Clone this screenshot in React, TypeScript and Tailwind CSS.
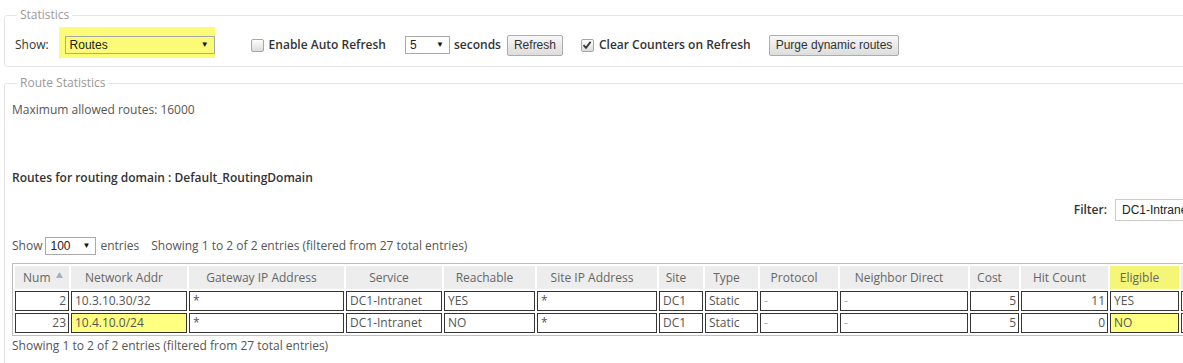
import React from 'react';

type Col = { label: string; w: number; align?: 'left' | 'right' };

const cols: Col[] = [
  { label: 'Num', w: 54, align: 'right' },
  { label: 'Network Addr', w: 116 },
  { label: 'Gateway IP Address', w: 155 },
  { label: 'Service', w: 96 },
  { label: 'Reachable', w: 91 },
  { label: 'Site IP Address', w: 120 },
  { label: 'Site', w: 44 },
  { label: 'Type', w: 53 },
  { label: 'Protocol', w: 78 },
  { label: 'Neighbor Direct', w: 128 },
  { label: 'Cost', w: 49, align: 'right' },
  { label: 'Hit Count', w: 87, align: 'right' },
  { label: 'Eligible', w: 69 },
  { label: '', w: 60 },
];

const rows = [
  ['2', '10.3.10.30/32', '*', 'DC1-Intranet', 'YES', '*', 'DC1', 'Static', '-', '-', '5', '11', 'YES', ''],
  ['23', '10.4.10.0/24', '*', 'DC1-Intranet', 'NO', '*', 'DC1', 'Static', '-', '-', '5', '0', 'NO', ''],
];

// cells that were marked yellow in the original
const marked = (r: number, c: number) => r === 1 && (c === 1 || c === 12);

function Select({ value, width, bg = 'bg-white' }: { value: string; width: number; bg?: string }) {
  return (
    <div
      className={`flex items-center justify-between h-[18px] border border-[#a9a9a9] ${bg} pl-[4px] pr-[5px] font-['Liberation_Sans',Arial,sans-serif] text-[12px] text-[#222]`}
      style={{ width }}
    >
      <span>{value}</span>
      <span className="text-[8px] text-[#111]">▼</span>
    </div>
  );
}

function Checkbox({ checked }: { checked?: boolean }) {
  return (
    <div className="w-[13px] h-[13px] rounded-[2px] border border-[#a6a6a6] bg-gradient-to-b from-[#fdfdfd] to-[#dcdcdc] flex items-center justify-center">
      {checked && (
        <svg width="10" height="10" viewBox="0 0 10 10">
          <path d="M1.5 5.2 L4 7.8 L8.6 1.8" fill="none" stroke="#333" strokeWidth="1.8" />
        </svg>
      )}
    </div>
  );
}

function Button({ children }: { children: React.ReactNode }) {
  return (
    <button className="h-[21px] px-[6px] border border-[#adadad] rounded-[2px] bg-gradient-to-b from-[#f7f7f7] to-[#dddddd] font-['Liberation_Sans',Arial,sans-serif] text-[12px] text-[#333] leading-none">
      {children}
    </button>
  );
}

export default function App() {
  return (
    <div className="w-[1183px] h-[363px] overflow-hidden bg-white font-['Open_Sans',sans-serif] text-[12px] text-[#333]">
      {/* Statistics */}
      <fieldset className="ml-[4px] mt-[7px] w-[1210px] border border-[#e4e4e4] rounded-[3px] pl-[10px] pb-[12px]">
        <legend className="ml-[2px] px-[3px] text-[#999] leading-[16px]">Statistics</legend>
        <div className="flex items-center h-[18px] mt-[13px]">
          <span className="text-[#333]">Show:</span>
          <div className="ml-[10px] self-start -mt-[9px] -mb-[4px] pt-[9px] pb-[4px] pl-[6px] bg-[#fbfb78]">
            <Select value="Routes" width={150} bg="bg-[#fbfb78]" />
          </div>
          <div className="ml-[36px]">
            <Checkbox />
          </div>
          <span className="ml-[5px] font-semibold">Enable Auto Refresh</span>
          <div className="ml-[19px]">
            <Select value="5" width={45} />
          </div>
          <span className="ml-[4px] font-semibold">seconds</span>
          <div className="ml-[6px]">
            <Button>Refresh</Button>
          </div>
          <div className="ml-[18px]">
            <Checkbox checked />
          </div>
          <span className="ml-[5px] font-semibold">Clear Counters on Refresh</span>
          <div className="ml-[18px]">
            <Button>Purge dynamic routes</Button>
          </div>
        </div>
      </fieldset>

      {/* Route Statistics */}
      <fieldset className="ml-[4px] mt-[8px] w-[1260px] border border-[#e4e4e4] rounded-[3px] pl-[7px] pb-[30px]">
        <legend className="ml-[5px] px-[3px] text-[#999] leading-[16px]">Route Statistics</legend>
        <div className="mt-[10px] leading-[17px] text-[#555]">Maximum allowed routes: 16000</div>
        <div className="mt-[51px] leading-[17px] font-semibold text-[#333]">
          Routes for routing domain : Default_RoutingDomain
        </div>

        <div className="mt-[13px] w-[1193px] flex justify-end items-center h-[22px]">
          <span className="font-semibold">Filter:</span>
          <div className="ml-[8px] w-[90px] h-[22px] border border-[#ccc] border-r-0 flex items-center pl-[6px] font-['Liberation_Sans',Arial,sans-serif] text-[12px] text-[#222] whitespace-nowrap overflow-hidden">
            DC1-Intranet
          </div>
        </div>

        <div className="mt-[17px] flex items-center h-[16px] text-[#555]">
          <span>Show</span>
          <div className="ml-[3px]">
            <Select value="100" width={51} />
          </div>
          <span className="ml-[4px]">entries</span>
          <span className="ml-[12px]">Showing 1 to 2 of 2 entries (filtered from 27 total entries)</span>
        </div>

        <table className="mt-[9px] w-[1232px] table-fixed border-separate border-spacing-[2px] border border-[#bdbdbd]">
          <colgroup>
            {cols.map((c, i) => (
              <col key={i} style={{ width: c.w }} />
            ))}
          </colgroup>
          <thead>
            <tr>
              {cols.map((c, i) => (
                <th
                  key={i}
                  className={`h-[23px] font-normal text-[12px] text-[#666] whitespace-nowrap overflow-hidden ${
                    i === 12 ? 'bg-[#f5f578]' : 'bg-[#ededed]'
                  } ${i === 0 ? 'text-left pl-[8px]' : 'text-center pl-[2px] pr-[12px]'}`}
                >
                  {i === 0 ? (
                    <span className="inline-flex items-center gap-[5px]">
                      Num
                      <svg width="7" height="6" viewBox="0 0 7 6" className="-mt-[5px]">
                        <path d="M3.5 0 L7 6 L0 6 Z" fill="#9db0cc" />
                      </svg>
                    </span>
                  ) : (
                    c.label
                  )}
                </th>
              ))}
            </tr>
          </thead>
          <tbody>
            {rows.map((r, ri) => (
              <tr key={ri}>
                {r.map((v, ci) => (
                  <td
                    key={ci}
                    className={`h-[20px] border border-[#353535] text-[12px] leading-none whitespace-nowrap overflow-hidden ${
                      cols[ci].align === 'right' ? 'text-right pr-[2px]' : 'text-left pl-[3px]'
                    } ${v === '-' ? 'text-[#aaa]' : 'text-[#555]'} ${marked(ri, ci) ? 'bg-[#ffff80]' : 'bg-white'}`}
                  >
                    {v}
                  </td>
                ))}
              </tr>
            ))}
          </tbody>
        </table>

        <div className="mt-[1px] leading-[17px] text-[#555]">
          Showing 1 to 2 of 2 entries (filtered from 27 total entries)
        </div>
      </fieldset>
    </div>
  );
}
